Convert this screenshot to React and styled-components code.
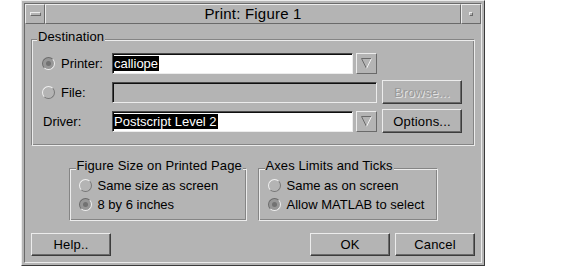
import React from 'react';
import styled, { createGlobalStyle, css } from 'styled-components';

const BG = '#b4b4b4';
const LIGHT = '#ececec';
const DARK = '#6a6a6a';
const DARKER = '#3c3c3c';
const ETCH = '#858585';

const GlobalStyle = createGlobalStyle`
  html, body { margin: 0; padding: 0; background: #ffffff; }
  body {
    font-family: "Liberation Sans", Arial, Helvetica, sans-serif;
    font-size: 13px;
    color: #000;
  }
`;

const Page = styled.div`
  padding-left: 21px;
`;

const Window = styled.div`
  box-sizing: border-box;
  width: 464px;
  height: 266px;
  background: ${BG};
  border: 1px solid;
  border-color: ${LIGHT} ${DARKER} ${DARKER} ${LIGHT};
  padding: 2px;
`;

const Frame = styled.div`
  box-sizing: border-box;
  height: 100%;
  border: 1px solid;
  border-color: ${DARK} ${LIGHT} ${LIGHT} ${DARK};
  display: flex;
  flex-direction: column;
`;

const bevelOut = css`
  box-sizing: border-box;
  border: 1px solid;
  border-color: ${LIGHT} ${DARK} ${DARK} ${LIGHT};
`;

const TitleBar = styled.div`
  display: flex;
  height: 20px;
  flex: none;
`;

const TitleButton = styled.div`
  ${bevelOut};
  width: 20px;
  flex: none;
  display: flex;
  align-items: center;
  justify-content: center;
`;

const Glyph = styled.span`
  box-sizing: border-box;
  width: ${p => p.$w}px;
  height: ${p => p.$h}px;
  border: 1px solid;
  border-color: ${LIGHT} ${DARK} ${DARK} ${LIGHT};
`;

const Title = styled.div`
  ${bevelOut};
  flex: 1;
  text-align: center;
  font-size: 15px;
  letter-spacing: 0.2px;
  line-height: 18px;
`;

const Client = styled.div`
  flex: 1;
  display: flex;
  flex-direction: column;
  padding: 6px 6px 0;
`;

const Group = styled.fieldset`
  box-sizing: border-box;
  margin: 0;
  padding: 0;
  min-width: 0;
  width: ${p => (p.$w ? `${p.$w}px` : 'auto')};
  border: 1px solid;
  border-color: ${ETCH} ${LIGHT} ${LIGHT} ${ETCH};
  box-shadow: inset 1px 1px 0 ${LIGHT}, inset -1px -1px 0 ${ETCH};
`;

const Legend = styled.legend`
  margin-left: ${p => p.$indent}px;
  padding: 0 1px 6px;
  font-size: 13px;
  line-height: 13px;
  letter-spacing: 0.1px;
  background: ${BG};
  white-space: nowrap;
`;

const DestGrid = styled.div`
  display: grid;
  grid-template-columns: 65px 265px 80px;
  grid-auto-rows: 24px;
  column-gap: 5px;
  row-gap: 5px;
  align-items: center;
  padding: 2px 12px 12px 10px;
`;

const Choice = styled.label`
  display: flex;
  align-items: center;
  gap: 6px;
  height: ${p => (p.$h ? `${p.$h}px` : 'auto')};
  font-size: 13px;
  white-space: nowrap;
`;

const Radio = styled.span`
  box-sizing: border-box;
  flex: none;
  width: 13px;
  height: 13px;
  border-radius: 50%;
  border: 1px solid;
  display: grid;
  place-items: center;
  ${p =>
    p.$on
      ? css`
          border-color: #6c6c6c #f0f0f0 #f0f0f0 #6c6c6c;
          background: #979797;
          &::after {
            content: '';
            width: 5px;
            height: 5px;
            border-radius: 50%;
            background: #727272;
          }
        `
      : css`
          border-color: #f0f0f0 #777777 #777777 #f0f0f0;
        `}
`;

const PlainLabel = styled.span`
  padding-left: 1px;
  font-size: 13px;
`;

const Combo = styled.div`
  display: flex;
  align-items: center;
  gap: 3px;
`;

const Field = styled.div`
  box-sizing: border-box;
  flex: 1;
  height: 21px;
  display: flex;
  align-items: center;
  background: ${p => (p.$disabled ? BG : '#ffffff')};
  border: 1px solid;
  border-color: #4a4a4a ${LIGHT} ${LIGHT} #4a4a4a;
  box-shadow: inset 1px 1px 0 #101010;
  font-size: 13px;
  overflow: hidden;
`;

const Selected = styled.span`
  background: #000;
  color: #fff;
  line-height: 15px;
  padding: 0 1px;
  white-space: nowrap;
`;

const DropButton = styled.div`
  ${bevelOut};
  width: 21px;
  height: 21px;
  flex: none;
  display: flex;
  align-items: center;
  justify-content: center;
`;

const PushButton = styled.button`
  box-sizing: border-box;
  width: 80px;
  height: ${p => p.$h || 23}px;
  padding: 0;
  background: ${BG};
  border: 1px solid;
  border-color: ${LIGHT} ${DARKER} ${DARKER} ${LIGHT};
  box-shadow: inset -1px -1px 0 ${DARK};
  font-family: "Liberation Sans", Arial, Helvetica, sans-serif;
  font-size: 13px;
  letter-spacing: 0.2px;
  color: #000;
  &:disabled {
    color: #9a9a9a;
    text-shadow: 1px 1px 0 #e4e4e4;
  }
`;

const LowerRow = styled.div`
  display: flex;
  justify-content: center;
  gap: 11px;
  margin-top: 13px;
`;

const OptionList = styled.div`
  display: flex;
  flex-direction: column;
  margin-top: -2px;
  padding: 0 0 6px 9px;
`;

const ButtonBar = styled.div`
  display: flex;
  justify-content: space-between;
  margin-top: 12px;
  padding: 0 0 0 -1px;
`;

const ButtonGroup = styled.div`
  display: flex;
  gap: 5px;
`;

function DownArrow() {
  return (
    <svg width="11" height="11" viewBox="0 0 11 11">
      <path d="M0.5 0.5 H10.5" stroke="#6a6a6a" strokeWidth="1" fill="none" />
      <path d="M0.5 0.5 L5.5 10.5" stroke="#6a6a6a" strokeWidth="1" fill="none" />
      <path d="M10.5 0.5 L5.5 10.5" stroke="#f2f2f2" strokeWidth="1" fill="none" />
    </svg>
  );
}

function OptionGroup({ title, width, options, selected }) {
  return (
    <Group $w={width}>
      <Legend $indent={6}>{title}</Legend>
      <OptionList>
        {options.map((o, i) => (
          <Choice key={o} $h={19}>
            <Radio $on={i === selected} />
            {o}
          </Choice>
        ))}
      </OptionList>
    </Group>
  );
}

export default function App() {
  return (
    <>
      <GlobalStyle />
      <Page>
        <Window>
          <Frame>
            <TitleBar>
              <TitleButton>
                <Glyph $w={11} $h={4} />
              </TitleButton>
              <Title>Print: Figure 1</Title>
              <TitleButton>
                <Glyph $w={4} $h={4} />
              </TitleButton>
            </TitleBar>
            <Client>
              <Group>
                <Legend $indent={5}>Destination</Legend>
                <DestGrid>
                  <Choice>
                    <Radio $on />
                    Printer:
                  </Choice>
                  <Combo>
                    <Field>
                      <Selected>calliope</Selected>
                    </Field>
                    <DropButton>
                      <DownArrow />
                    </DropButton>
                  </Combo>
                  <span />

                  <Choice>
                    <Radio />
                    File:
                  </Choice>
                  <Combo>
                    <Field $disabled />
                  </Combo>
                  <PushButton $h={24} disabled>
                    Browse...
                  </PushButton>

                  <PlainLabel>Driver:</PlainLabel>
                  <Combo>
                    <Field>
                      <Selected>Postscript Level 2</Selected>
                    </Field>
                    <DropButton>
                      <DownArrow />
                    </DropButton>
                  </Combo>
                  <PushButton $h={24}>Options...</PushButton>
                </DestGrid>
              </Group>

              <LowerRow>
                <OptionGroup
                  title="Figure Size on Printed Page"
                  width={178}
                  options={['Same size as screen', '8 by 6 inches']}
                  selected={1}
                />
                <OptionGroup
                  title="Axes Limits and Ticks"
                  width={180}
                  options={['Same as on screen', 'Allow MATLAB to select']}
                  selected={1}
                />
              </LowerRow>

              <ButtonBar>
                <PushButton>Help..</PushButton>
                <ButtonGroup>
                  <PushButton>OK</PushButton>
                  <PushButton>Cancel</PushButton>
                </ButtonGroup>
              </ButtonBar>
            </Client>
          </Frame>
        </Window>
      </Page>
    </>
  );
}
